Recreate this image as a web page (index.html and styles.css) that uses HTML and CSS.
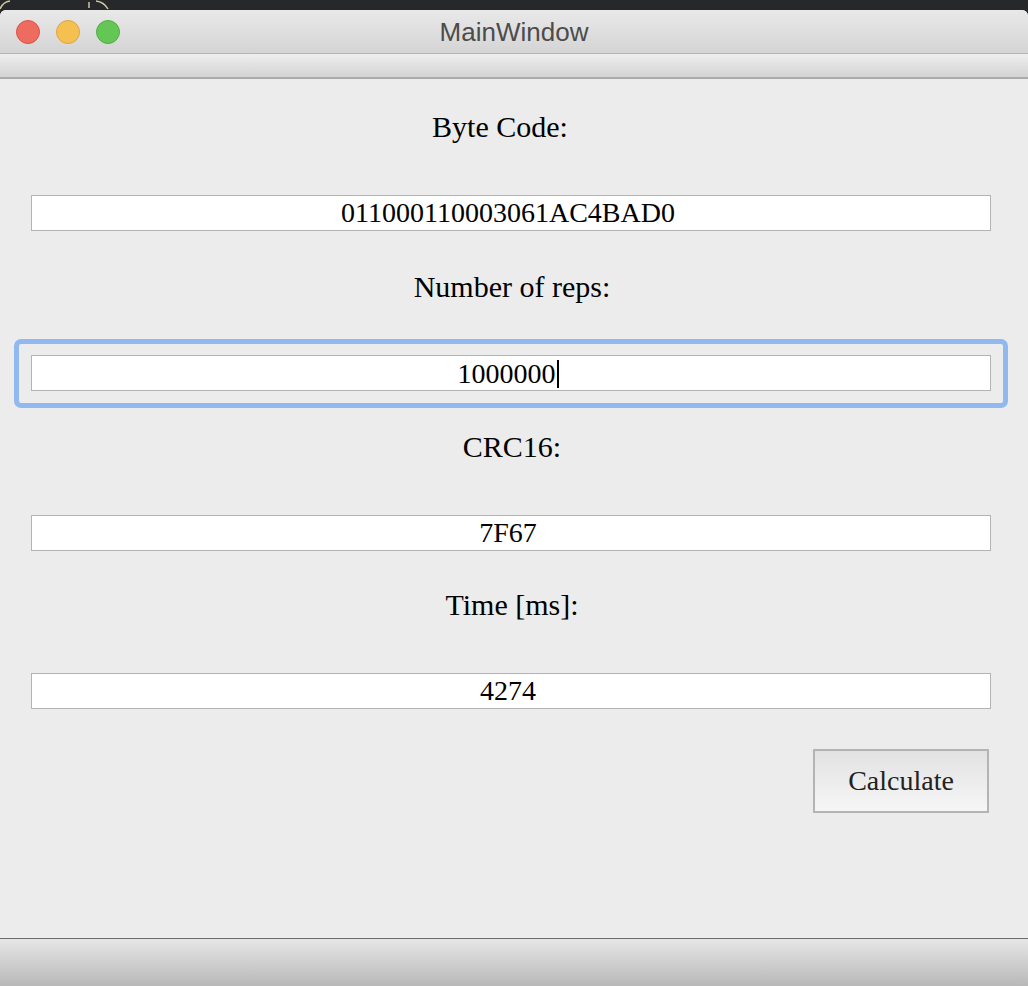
FILE: index.html
```html
<!DOCTYPE html>
<html>
<head>
<meta charset="utf-8">
<title>MainWindow</title>
<link rel="stylesheet" href="styles.css">
</head>
<body>
<div class="screen">
  <div class="desktop-strip">
    <svg class="strip-art" width="120" height="10" viewBox="0 0 120 10">
      <path d="M0 9 Q3 2 10 1" fill="none" stroke="#cfc6a2" stroke-width="1.5"/>
      <path d="M89 2 L89 8" fill="none" stroke="#cfc6a2" stroke-width="1.5"/>
      <path d="M96 1 Q104 2 108 9" fill="none" stroke="#cfc6a2" stroke-width="1.5"/>
    </svg>
  </div>
  <div class="window">
    <div class="titlebar">
      <div class="lights">
        <span class="light red"></span>
        <span class="light yellow"></span>
        <span class="light green"></span>
      </div>
      <div class="title">MainWindow</div>
    </div>
    <div class="toolbar"></div>
    <div class="content">
      <div class="field">
        <div class="label label-shift">Byte Code:</div>
        <div class="input-wrap"><input class="input" type="text" value="011000110003061AC4BAD0"></div>
      </div>
      <div class="field">
        <div class="label">Number of reps:</div>
        <div class="input-wrap focused"><div class="input">1000000<span class="caret"></span></div></div>
      </div>
      <div class="field">
        <div class="label">CRC16:</div>
        <div class="input-wrap"><input class="input" type="text" value="7F67"></div>
      </div>
      <div class="field field-last">
        <div class="label">Time [ms]:</div>
        <div class="input-wrap"><input class="input" type="text" value="4274"></div>
      </div>
      <div class="actions">
        <button class="button" type="button">Calculate</button>
      </div>
    </div>
    <div class="statusbar"></div>
  </div>
</div>
</body>
</html>
```

FILE: styles.css
```css
* { box-sizing: border-box; }
html, body { margin: 0; padding: 0; }
body {
  background: #27282a;
  width: 1028px;
  height: 986px;
  overflow: hidden;
}
.screen {
  display: flex;
  flex-direction: column;
  height: 986px;
}
.desktop-strip {
  height: 10px;
  background: #27282a;
  flex: none;
  position: relative;
}
.strip-art { display: block; }
.window {
  flex: 1;
  display: flex;
  flex-direction: column;
  border-radius: 6px 6px 0 0;
  overflow: hidden;
  background: #ececec;
}
.titlebar {
  height: 44px;
  flex: none;
  background: linear-gradient(#e9e9e9, #d4d4d4);
  border-bottom: 1px solid #b4b4b4;
  position: relative;
  display: flex;
  align-items: center;
  justify-content: center;
}
.lights {
  position: absolute;
  left: 16px;
  top: 10px;
  display: flex;
  gap: 16px;
}
.light {
  width: 24px;
  height: 24px;
  border-radius: 50%;
  display: block;
}
.red { background: #ee6b5f; border: 1px solid #d8554b; }
.yellow { background: #f6c050; border: 1px solid #dba542; }
.green { background: #63c655; border: 1px solid #55ad45; }
.title {
  font-family: "Liberation Sans", Arial, sans-serif;
  font-size: 26px;
  color: #4c4c4c;
  margin-top: 2px;
  margin-left: 0;
}
.toolbar {
  height: 25px;
  flex: none;
  background: linear-gradient(#efefef, #d3d3d3);
  border-bottom: 2px solid #ababab;
}
.content {
  flex: 1;
  background: #ececec;
  padding: 30px 37px 0 31px;
  display: flex;
  flex-direction: column;
  gap: 38px;
  font-family: "Liberation Serif", "Times New Roman", serif;
}
.field {
  display: flex;
  flex-direction: column;
  gap: 48px;
}
.field-last { margin-top: -2px; }
.label {
  height: 38px;
  line-height: 36px;
  text-align: center;
  font-size: 30px;
  color: #000;
  padding-left: 2px;
}
.label-shift { padding-right: 22px; padding-left: 0; }
.input-wrap {
  position: relative;
}
.focused::after {
  content: "";
  position: absolute;
  left: -17px;
  right: -17px;
  top: -16px;
  bottom: -17px;
  border: 5px solid #91b8ef;
  border-radius: 7px;
  pointer-events: none;
}
.input {
  display: block;
  width: 960px;
  height: 36px;
  margin: 0;
  border: 1px solid #b3b3b3;
  background: #fff;
  font-family: "Liberation Serif", "Times New Roman", serif;
  font-size: 28px;
  color: #000;
  text-align: center;
  padding: 0 6px 0 0;
  line-height: 35px;
  outline: none;
}
.caret {
  display: inline-block;
  width: 2px;
  height: 28px;
  background: #000;
  vertical-align: -5px;
  margin-left: 1px;
}
.actions {
  display: flex;
  justify-content: flex-end;
  padding-right: 2px;
  margin-top: 2px;
}
.button {
  width: 176px;
  height: 64px;
  border: 2px solid #b4b4b4;
  background: linear-gradient(#e2e2e2, #f6f6f6);
  font-family: "Liberation Serif", "Times New Roman", serif;
  font-size: 28px;
  color: #222;
  padding: 0;
  border-radius: 0;
}
.statusbar {
  height: 48px;
  flex: none;
  border-top: 1px solid #6b6b6b;
  background: linear-gradient(#e6e6e6, #b8b8b8);
}
```
